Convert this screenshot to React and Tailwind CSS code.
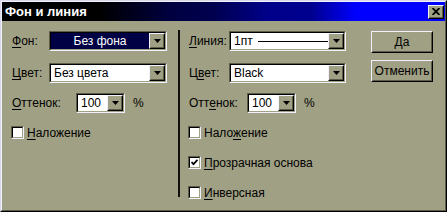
import React from 'react';

const font = { fontFamily: '"Liberation Sans", Arial, sans-serif' };

function Arrow() {
  return (
    <div className="w-[16px] h-full border border-t-[#f0f0ff] border-l-[#f0f0ff] border-b-black border-r-black bg-[#a0a084]">
      <div className="h-full border border-t-[#a0a084] border-l-[#a0a084] border-b-[#5c5c48] border-r-[#5c5c48] flex items-center justify-center">
        <svg width="7" height="4" viewBox="0 0 7 4">
          <path d="M0 0H7L3.5 4Z" fill="black" />
        </svg>
      </div>
    </div>
  );
}

function Combo({ width, children, dark }) {
  return (
    <div className={`${width} h-[20px] border border-t-[#5c5c48] border-l-[#5c5c48] border-b-[#f0f0ff] border-r-[#f0f0ff]`}>
      <div className="h-full border border-t-black border-l-black border-b-[#a0a084] border-r-[#a0a084] flex">
        <div className={`flex-1 flex items-center min-w-0 ${dark ? 'bg-[#000044] text-white justify-center' : 'bg-white text-black pl-[3px]'}`}>
          {children}
        </div>
        <Arrow />
      </div>
    </div>
  );
}

function Check({ checked, children }) {
  return (
    <div className="flex items-center h-[13px]">
      <div className="w-[13px] h-[13px] border border-t-[#5c5c48] border-l-[#5c5c48] border-b-[#f0f0ff] border-r-[#f0f0ff]">
        <div className="h-full border border-t-black border-l-black border-b-[#a0a084] border-r-[#a0a084] bg-white flex items-center justify-center">
          {checked && (
            <svg width="7" height="7" viewBox="0 0 7 7">
              <path d="M0.5 3L2.5 5.2L6.5 0.8" stroke="black" strokeWidth="1.8" fill="none" />
            </svg>
          )}
        </div>
      </div>
      <span className="ml-[3px] leading-none">{children}</span>
    </div>
  );
}

function Button({ children }) {
  return (
    <div className="w-[62px] h-[22px] border border-t-[#f0f0ff] border-l-[#f0f0ff] border-b-black border-r-black">
      <div className="h-full border border-t-[#a0a084] border-l-[#a0a084] border-b-[#5c5c48] border-r-[#5c5c48] flex items-center justify-center">
        {children}
      </div>
    </div>
  );
}

const U = ({ children }) => <span className="underline underline-offset-2">{children}</span>;

export default function App() {
  return (
    <div style={font} className="w-[447px] h-[212px] bg-[#a0a084] text-[12px] text-black border border-t-[#d8d8e8] border-l-[#d8d8e8] border-b-black border-r-black">
      <div className="h-full flex flex-col border border-t-[#f0f0ff] border-l-[#f0f0ff] border-b-[#5c5c48] border-r-[#5c5c48]">
        {/* title */}
        <div className="h-[19px] flex items-center justify-between pl-[3px] pr-[1px] bg-[linear-gradient(90deg,#000000_0%,#000000_22%,#000040_38%,#000050_48%,#00008a_60%,#000090_70%,#0000ff_80%,#0000ff_100%)]">
          <span className="text-white font-bold text-[13px] leading-none">Фон и линия</span>
          <div className="w-[16px] h-[14px] border border-t-[#f0f0ff] border-l-[#f0f0ff] border-b-black border-r-black bg-[#a0a084]">
            <div className="h-full border border-t-[#a0a084] border-l-[#a0a084] border-b-[#5c5c48] border-r-[#5c5c48] flex items-center justify-center">
              <svg width="8" height="7" viewBox="0 0 8 7">
                <path d="M0.5 0L7.5 7M7.5 0L0.5 7" stroke="black" strokeWidth="1.8" />
              </svg>
            </div>
          </div>
        </div>

        {/* body */}
        <div className="flex-1 flex pt-[10px]">
          {/* left */}
          <div className="w-[176px] pl-[10px] flex flex-col">
            <div className="flex items-center h-[20px]">
              <span className="w-[37px]"><U>Ф</U>он:</span>
              <Combo width="w-[118px]" dark>Без фона</Combo>
            </div>
            <div className="flex items-center h-[20px] mt-[12px]">
              <span className="w-[37px]"><U>Ц</U>вет:</span>
              <Combo width="w-[118px]">Без цвета</Combo>
            </div>
            <div className="flex items-center h-[20px] mt-[10px]">
              <span className="w-[64px]"><U>О</U>ттенок:</span>
              <Combo width="w-[49px]">100</Combo>
              <span className="ml-[8px]">%</span>
            </div>
            <div className="mt-[13px] -ml-px">
              <Check><U>Н</U>аложение</Check>
            </div>
          </div>

          {/* divider */}
          <div className="w-[2px] h-[167px] -mt-px bg-[#101010]" />

          {/* right */}
          <div className="w-[191px] pl-[9px] flex flex-col">
            <div className="flex items-center h-[20px]">
              <span className="w-[40px]"><U>Л</U>иния:</span>
              <Combo width="w-[117px]">
                <span>1пт</span>
                <span className="ml-[5px] w-[70px] h-px bg-black" />
              </Combo>
            </div>
            <div className="flex items-center h-[20px] mt-[12px]">
              <span className="w-[40px]">Ц<U>в</U>ет:</span>
              <Combo width="w-[117px]">Black</Combo>
            </div>
            <div className="flex items-center h-[20px] mt-[10px]">
              <span className="w-[58px]">Отт<U>е</U>нок:</span>
              <Combo width="w-[49px]">100</Combo>
              <span className="ml-[8px]">%</span>
            </div>
            <div className="mt-[13px] -ml-px flex flex-col gap-[17px]">
              <Check>Нало<U>ж</U>ение</Check>
              <Check checked><U>П</U>розрачная основа</Check>
              <Check><U>И</U>нверсная</Check>
            </div>
          </div>

          {/* buttons */}
          <div className="flex flex-col gap-[7px]">
            <Button>Да</Button>
            <Button>Отменить</Button>
          </div>
        </div>
      </div>
    </div>
  );
}
